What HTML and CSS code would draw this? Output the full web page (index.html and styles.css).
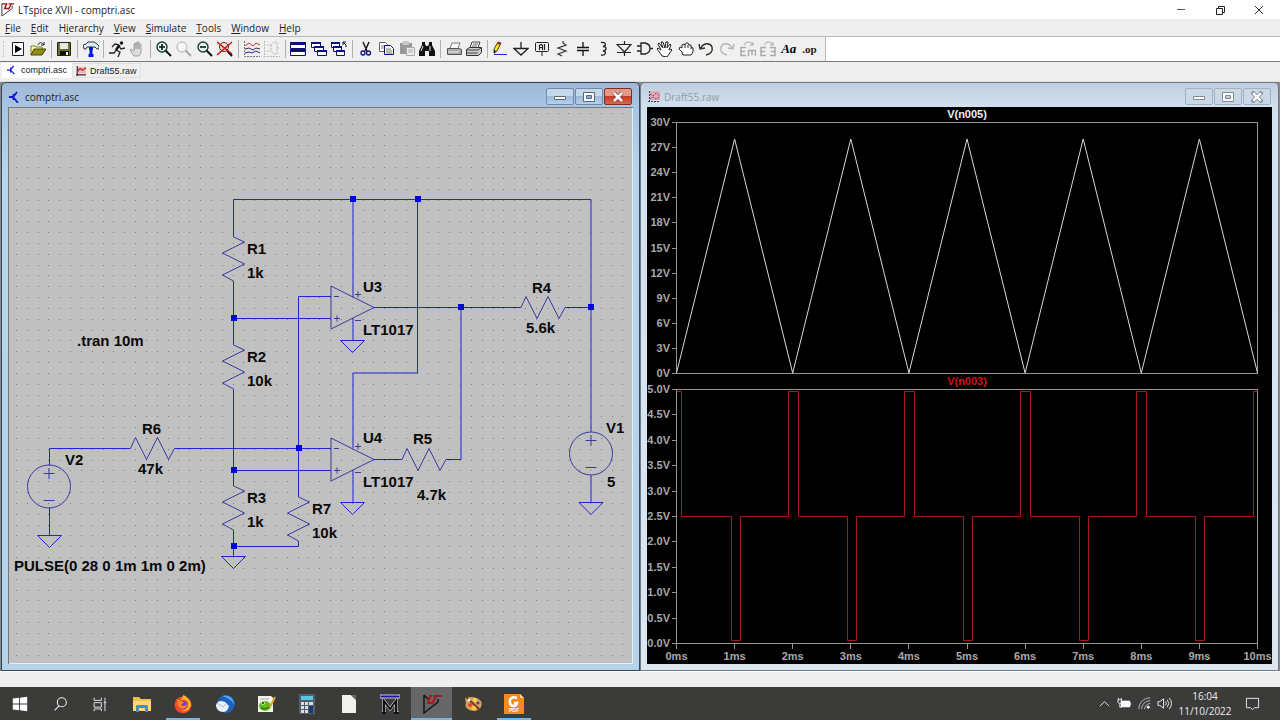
FILE: index.html
```html
<!DOCTYPE html>
<html lang="en">
<head>
  <meta charset="UTF-8">
  <meta name="viewport" content="width=device-width, initial-scale=1.0">
  <title>LTspice XVII - comptri.asc</title>
  <link rel="stylesheet" href="styles.css">
</head>
<body>
  <header class="titlebar">
    <svg class="app-icon" viewBox="0 0 16 16"><path d="M2 2v13l11-8V4" fill="none" stroke="#333"/><path d="M2 2h4M7 2L5 7h4M9 2h6M12 2l-3 6M6 2h2" fill="none" stroke="#a00f1c" stroke-width="1.500"/></svg>
    <span class="title">LTspice XVII - comptri.asc</span>
    <div class="sysbuttons">
      <button aria-label="Minimize"><svg viewBox="0 0 12 12"><path d="M2 5.500h8" stroke="#555"/></svg></button>
      <button aria-label="Restore"><svg viewBox="0 0 12 12"><path d="M2.500 4.500h6v6h-6zM4.500 4.500v-2h6v6h-2" fill="none" stroke="#222"/></svg></button>
      <button aria-label="Close"><svg viewBox="0 0 12 12"><path d="M2 2l8 8M10 2l-8 8" stroke="#333"/></svg></button>
    </div>
  </header>

  <nav class="menubar">
    <button><u>F</u>ile</button>
    <button><u>E</u>dit</button>
    <button>H<u>i</u>erarchy</button>
    <button><u>V</u>iew</button>
    <button><u>S</u>imulate</button>
    <button><u>T</u>ools</button>
    <button><u>W</u>indow</button>
    <button><u>H</u>elp</button>
  </nav>

  <div class="toolstrip">
    <div class="toolbar">
      <button aria-label="New"><svg viewBox="0 0 16 16"><path d="M2.500 1.500h11v13h-11z" fill="#fff" stroke="#222"/><path d="M5 4v8l7-4z" fill="#000"/></svg></button>
      <button aria-label="Open"><svg viewBox="0 0 16 16"><path d="M1 14V5h4l1 1h6v2" fill="#ffffa0" stroke="#777720"/><path d="M1 14l3-6h12l-4 6z" fill="#8c8c18" stroke="#444408"/><path d="M8 4c1-3 4-3 6 0m0-3v3h-3" fill="none" stroke="#222"/></svg></button>
      <i class="sep"></i>
      <button aria-label="Save"><svg viewBox="0 0 16 16"><path d="M1.500 1.500h13v13h-13z" fill="#6d7024" stroke="#222"/><path d="M4 2h8v6H4z" fill="#e8e8e8"/><path d="M4 10h9v4H4z" fill="#111"/><path d="M10 11h2v3h-2z" fill="#fff"/></svg></button>
      <i class="sep"></i>
      <button aria-label="Control Panel"><svg viewBox="0 0 16 16"><path d="M0 4l3-1 2-2h6l3 2 2 2v3h-2l-2-2H4L3 8H1z" fill="#dceff4" stroke="#333"/><path d="M6 6h4v3H9.500v4h1v3h-5v-3h1V9H6z" fill="#0018e0"/></svg></button>
      <i class="sep"></i>
      <button aria-label="Run"><svg viewBox="0 0 16 16"><circle cx="12.500" cy="2" r="1.700" fill="#111"/><path d="M10.500 4L7 9" stroke="#111" stroke-width="2.500"/><path d="M7 9l4 2-2 5M7 9l-2 3H0M10 4L6 3 3 6M10 5l2 3 4-1" fill="none" stroke="#222" stroke-width="1.300"/></svg></button>
      <button aria-label="Halt"><svg viewBox="0 0 16 16"><path d="M5 15l-4-6 1-1 3 2V3h1v5V2h2v6-7h2v7-5h2v9l-2 3z" fill="#dcdcdc" stroke="#a2a2a2"/></svg></button>
      <i class="sep"></i>
      <button aria-label="Zoom in"><svg viewBox="0 0 16 16"><circle cx="6" cy="6" r="5" fill="#e4f5ee" stroke="#134536" stroke-width="1.400"/><path d="M3 6h6M6 3v6" stroke="#111" stroke-width="1.600"/><path d="M9.500 9.500L15 15" stroke="#111" stroke-width="2"/></svg></button>
      <button aria-label="Pan"><svg viewBox="0 0 16 16"><circle cx="6" cy="6" r="5" fill="#f6f6f6" stroke="#b0b0b0"/><path d="M9.500 9.500L15 15" stroke="#aaa" stroke-width="2"/></svg></button>
      <button aria-label="Zoom out"><svg viewBox="0 0 16 16"><circle cx="6" cy="6" r="5" fill="#e4f5ee" stroke="#134536" stroke-width="1.400"/><path d="M3 6h6" stroke="#111" stroke-width="1.600"/><path d="M9.500 9.500L15 15" stroke="#111" stroke-width="2"/></svg></button>
      <button aria-label="Zoom to fit"><svg viewBox="0 0 16 16"><circle cx="7" cy="6" r="4.500" fill="#f8dcd8" stroke="#432"/><path d="M10 9.500l5 5.500" stroke="#111" stroke-width="2"/><path d="M0 1l15 12M15 1L0 14" stroke="#c31414" stroke-width="1.500"/></svg></button>
      <i class="sep"></i>
      <button aria-label="Autorange"><svg viewBox="0 0 16 16"><path d="M.500 0v15.500H16" fill="none" stroke="#777" stroke-dasharray="2 1"/><path d="M1 5l4-3 4 3 3-3 4 2" fill="none" stroke="#b33"/><path d="M1 8l4-1 4 2 3-2 4 1" fill="none" stroke="#333"/><path d="M1 12l4-1 3 1 4-2 4 2" fill="none" stroke="#22b"/></svg></button>
      <button aria-label="Symbol"><svg viewBox="0 0 16 16" fill="none" stroke="#b8b8b8"><path d="M.500 0v15.500H16" stroke-dasharray="2 1"/><path d="M3 4h4l3-3h3v12h-3L7 10H3M7 4v6M13 7h3" stroke-dasharray="2 1"/></svg></button>
      <i class="sep"></i>
      <button aria-label="Tile"><svg viewBox="0 0 16 16"><path d="M.500 1.500h15v6H.500zM.500 8.500h15v6H.500z" fill="#fff" stroke="#10107c"/><path d="M0 1h16v3H0zM0 8h16v3H0z" fill="#10107c"/></svg></button>
      <button aria-label="Cascade"><svg viewBox="0 0 16 16"><g fill="#fff" stroke="#10107c"><path d="M.500 1.500h9v5h-9z"/><path d="M3.500 5.500h9v5h-9z"/><path d="M6.500 9.500h9v5h-9z"/></g><path d="M0 1h10v2H0zM3 5h10v2H3zM6 9h10v2H6z" fill="#10107c"/></svg></button>
      <button aria-label="Close all"><svg viewBox="0 0 16 16"><g fill="#fff" stroke="#10107c"><path d="M.500 1.500h8v5h-8z"/><path d="M2.500 5.500h8v5h-8z"/><path d="M5.500 9.500h8v5h-8z"/></g><path d="M0 1h9v2H0zM2 5h9v2H2zM5 9h9v2H5z" fill="#10107c"/><path d="M15 6V4l-3-3m0 3V1h3" fill="none" stroke="#111"/></svg></button>
      <i class="sep"></i>
      <button aria-label="Cut"><svg viewBox="0 0 16 16" fill="none"><path d="M5 1l4 9M11 1L7 10" stroke="#111" stroke-width="1.400"/><circle cx="5" cy="12" r="2" stroke="#10107c" stroke-width="1.300"/><circle cx="10.500" cy="12" r="2" stroke="#10107c" stroke-width="1.300"/></svg></button>
      <button aria-label="Copy"><svg viewBox="0 0 16 16"><path d="M1.500 1.500h6l2 2v7h-8z" fill="#fff" stroke="#666"/><path d="M3 5h4M3 7h4" stroke="#888"/><path d="M6.500 4.500h6l3 3v6h-9z" fill="#fff" stroke="#10107c"/><path d="M8 8h5M8 10h6M8 12h6" stroke="#777"/></svg></button>
      <button aria-label="Paste"><svg viewBox="0 0 16 16"><path d="M1 2h12v11H1z" fill="#999"/><path d="M4 0h6v4H4z" fill="#c8c8c8"/><path d="M7.500 6.500h8v8h-8z" fill="#eee" stroke="#aaa"/><path d="M9 9h5M9 11h5" stroke="#aaa"/></svg></button>
      <button aria-label="Find"><svg viewBox="0 0 16 16"><path d="M3 1h3v2l1 2h2l1-2V1h3v3l3 6v5h-6v-5H6v5H0v-5l3-6z" fill="#111"/><path d="M4 5l-2 5M11 5v5" stroke="#eee"/></svg></button>
      <i class="sep"></i>
      <button aria-label="Page setup"><svg viewBox="0 0 16 16"><path d="M4 7l2-5h8l-2 5" fill="#fff" stroke="#777"/><path d="M1.500 7.500h12l2 1v5h-14z" fill="#aaa" stroke="#555"/><path d="M2 11h11" stroke="#eee"/></svg></button>
      <button aria-label="Print"><svg viewBox="0 0 16 16"><path d="M4 7l2-6h8l-2 6" fill="#fff" stroke="#444"/><path d="M7 3h5M6 5h5" stroke="#666"/><path d="M.500 8.500l3-2h12v5l-3 3h-12z" fill="#ccc" stroke="#333"/><path d="M1 9h11l3-2M1 12h11" fill="none" stroke="#444"/></svg></button>
      <i class="sep"></i>
      <button aria-label="Wire"><svg viewBox="0 0 16 16"><path d="M2 8l4-7 3 1-4 8-3 2z" fill="#f2ec1a" stroke="#443"/><path d="M6 1l3 1-1 2-3-1z" fill="#c81a1a"/><path d="M2 9l2 1-2 3z" fill="#111"/><path d="M2 13.500h13" stroke="#22d"/></svg></button>
      <button aria-label="Ground"><svg viewBox="0 0 16 16"><path d="M8 1v6M1 7.500h14L8 14z" fill="none" stroke="#222" stroke-width="1.300"/></svg></button>
      <button aria-label="Label Net"><svg viewBox="0 0 16 16" fill="none" stroke="#222"><rect x="1.500" y="1.500" width="13" height="9" rx="1"/><path d="M8 11v4"/><path d="M5.500 9V4.500l1-1h1l1 1V9M5.500 6.500h3M10.500 3v6" stroke-width="1.200"/></svg></button>
      <button aria-label="Resistor"><svg viewBox="0 0 16 16"><path d="M9 0v2l3 2-8 3 8 3-8 3 4 2" fill="none" stroke="#333" stroke-width="1.200"/></svg></button>
      <button aria-label="Capacitor"><svg viewBox="0 0 16 16"><path d="M8 1v5M8 10v5" stroke="#111" stroke-width="1.300"/><path d="M2 6.500h12M2 9.500h12" stroke="#111" stroke-width="1.500"/></svg></button>
      <button aria-label="Inductor"><svg viewBox="0 0 16 16"><path d="M6 1.500c5-1 6 3.500 2 4 4 0 4 4 0 4.500 4 0 3 5-2 4" fill="none" stroke="#222" stroke-width="1.300"/></svg></button>
      <button aria-label="Diode"><svg viewBox="0 0 16 16"><path d="M8.500 0v3M8.500 11v4M1 3.500h14L8.500 11zM1 11.500h14" fill="none" stroke="#222" stroke-width="1.200"/></svg></button>
      <button aria-label="Component"><svg viewBox="0 0 16 16"><path d="M0 5h4M0 10h4M4 2h4q5 1 5 5.500T8 13H4zM13 7.500h3" fill="none" stroke="#222" stroke-width="1.300"/></svg></button>
      <button aria-label="Move"><svg viewBox="0 0 16 16"><path d="M5 15L3 12 0 8l1-1 3 2-3-6 1-1 4 5-2-6h2l2 6 1-6h2l-1 6 3-4 1 1-2 5 2-1 1 1-3 4-2 3z" fill="#fff" stroke="#222"/></svg></button>
      <button aria-label="Drag"><svg viewBox="0 0 16 16"><path d="M5 14l-1-3-3-3 1-2 2 1V4l2-1 1 1 1-2h2l1 2h2v2l2 1v4l-2 3z" fill="#fff" stroke="#222"/><path d="M7 4v3M10 4v3M13 6v2" stroke="#222"/></svg></button>
      <button aria-label="Undo"><svg viewBox="0 0 16 16"><path d="M3 7c2-5 9-6 11-1 1 4-1 7-6 8M1 3l1 5 5-1" fill="none" stroke="#332d24" stroke-width="1.400"/></svg></button>
      <button aria-label="Redo"><svg viewBox="0 0 16 16"><path d="M13 7c-2-5-9-6-11-1-1 4 1 7 6 8M15 3l-1 5-5-1" fill="none" stroke="#b5b5b5" stroke-width="1.400"/></svg></button>
      <button aria-label="Rotate"><svg viewBox="0 0 16 16" fill="none" stroke="#aaa"><path d="M4 4c2-4 7-4 9 0m0-3v3h-3"/><path d="M6 6.500H1v8h5M1 10.500h4" stroke-width="1.500"/><path d="M8.500 15V9.500h7V15M12 10v4" stroke-width="1.500"/></svg></button>
      <button aria-label="Mirror"><svg viewBox="0 0 16 16" fill="none" stroke="#aaa"><path d="M4 4c2-4 7-4 9 0m0-3v3h-3"/><path d="M6 6.500H1v8h5M1 10.500h4M10 6.500h5v8h-5M15 10.500h-4" stroke-width="1.500"/></svg></button>
      <button class="text-tool">Aa</button>
      <button class="op-tool">.op</button>
    </div>
  </div>

  <div class="tabs">
    <button class="tab active"><svg viewBox="0 0 12 12"><path d="M0 6h4M4.500 3v6M5 5l3-4M5 7l4 4" fill="none" stroke="#1414d2" stroke-width="1.500"/></svg>comptri.asc</button>
    <button class="tab"><svg viewBox="0 0 12 12"><path d="M2 1h10v8H2z" fill="#e9b6b6"/><path d="M1.500 0v12M0 10.500h12" stroke="#333" stroke-width="1.500"/><path d="M2 6l3-3 3 2 4-3" fill="none" stroke="#c22" stroke-width="1.500"/></svg>Draft55.raw</button>
  </div>

  <main class="mdi">
    <section class="window">
      <div class="caption">
        <svg class="caption-icon" viewBox="0 0 12 12"><path d="M0 6h4M4.500 3v6M5 5l3-4M5 7l4 5" fill="none" stroke="#1414d2" stroke-width="1.800"/></svg>
        <span>comptri.asc</span>
        <div class="caption-buttons">
          <button aria-label="Minimize"><svg viewBox="0 0 12 12"><path d="M.500 5.500h11v3H.500z" fill="#fff" stroke="#56657a"/></svg></button>
          <button aria-label="Maximize"><svg viewBox="0 0 12 12"><path d="M.500 1.500h11v9H.500z" fill="#fff" stroke="#56657a"/><path d="M3.500 4.500h5v3h-5z" fill="#8bacd0" stroke="#56657a"/></svg></button>
          <button class="close" aria-label="Close"><svg viewBox="0 0 12 12"><path d="M2 2l8 8M10 2l-8 8" stroke="#6b4444" stroke-width="4"/><path d="M2 2l8 8M10 2l-8 8" stroke="#fff" stroke-width="2.500"/></svg></button>
        </div>
      </div>
      <div class="client">
        <svg class="schematic" viewBox="8 107 625 557" preserveAspectRatio="xMinYMin meet">
          <defs>
            <path id="res" d="M0 0l11 5-22 11 22 11-22 11 11 6"/>
            <path id="resh" d="M0 0l5-11 11 22 11-22 11 22 6-11"/>
            <path id="gnd" d="M-12 0h24L0 12z"/>
            <g id="source">
              <circle r="21.500"/>
              <path d="M-5.500-13h11M0-18.500v11M-5.500 14h11"/>
            </g>
            <g id="opamp">
              <path d="M0-21.500v43L43 0zM3-11h5M3 11h6M6 8v6M24-13h6M27-16v6M24 13h6"/>
            </g>
          </defs>
          <path id="grid" class="grid"/>
          <g class="wires">
            <path d="M233.500 237V199.500H591V432M353 199.500V297M417.500 199.500V373H353V448"/>
            <path d="M233.500 281v64M233.500 318.500H331M331 296.500H298.500V497M233.500 389v97M233.500 530v27"/>
            <path d="M49.500 465V448.500H130.500M174.500 448.500H331M233.500 470.500H331M233.500 546.500h65V541"/>
            <path d="M374 307.500H521M565 307.500H591M374 459.500h28M446 459.500h15V307.500"/>
            <path d="M353 318v22M353 470v32M591 475v27M49.500 507v28"/>
            <use href="#gnd" x="352.500" y="340.500"/>
            <use href="#gnd" x="352.500" y="502.500"/>
            <use href="#gnd" x="591" y="502.500"/>
            <use href="#gnd" x="49.500" y="535.500"/>
            <use href="#gnd" x="233.500" y="556.500"/>
          </g>
          <g class="parts">
            <use href="#res" x="233.500" y="237"/>
            <use href="#res" x="233.500" y="345"/>
            <use href="#res" x="233.500" y="486"/>
            <use href="#res" x="298.500" y="497"/>
            <use href="#resh" x="521" y="307.500"/>
            <use href="#resh" x="130.500" y="448.500"/>
            <use href="#resh" x="402" y="459.500"/>
            <use href="#opamp" x="331" y="307.500"/>
            <use href="#opamp" x="331" y="459.500"/>
            <use href="#source" x="49" y="486.500"/>
            <use href="#source" x="591" y="453.500"/>
          </g>
          <path class="nodes" d="M350 196h6v6h-6zM415 196h6v6h-6zM231 315h6v6h-6zM458 304h6v6h-6zM588 304h6v6h-6zM296 445h6v6h-6zM231 467h6v6h-6zM231 543h6v6h-6z"/>
          <g class="labels">
            <text x="247" y="254">R1</text><text x="247" y="278">1k</text>
            <text x="247" y="362">R2</text><text x="247" y="386">10k</text>
            <text x="247" y="503">R3</text><text x="247" y="527">1k</text>
            <text x="312" y="514">R7</text><text x="312" y="538">10k</text>
            <text x="532" y="293">R4</text><text x="526" y="333">5.6k</text>
            <text x="413" y="444">R5</text><text x="417" y="500">4.7k</text>
            <text x="142" y="434">R6</text><text x="138" y="474">47k</text>
            <text x="363" y="292">U3</text><text x="363" y="335">LT1017</text>
            <text x="363" y="443">U4</text><text x="363" y="487">LT1017</text>
            <text x="606" y="433">V1</text><text x="607" y="487">5</text>
            <text x="65" y="465">V2</text>
            <text x="77" y="346">.tran 10m</text>
            <text x="14" y="571">PULSE(0 28 0 1m 1m 0 2m)</text>
          </g>
        </svg>
      </div>
    </section>

    <section class="window inactive">
      <div class="caption">
        <svg class="caption-icon" viewBox="0 0 12 12"><path d="M2 0h10v9H2z" fill="#dda9b8"/><path d="M1.500 0v12M0 10.500h12" stroke="#445" stroke-dasharray="2 1"/><path d="M2 3l3 2 3-3 4 3M2 8l3-2 3 2 4-2" fill="none" stroke="#946" stroke-dasharray="2 1"/></svg>
        <span>Draft55.raw</span>
        <div class="caption-buttons">
          <button aria-label="Minimize"><svg viewBox="0 0 12 12"><path d="M.500 5.500h11v3H.500z" fill="#fff" stroke="#7f8893"/></svg></button>
          <button aria-label="Maximize"><svg viewBox="0 0 12 12"><path d="M.500 1.500h11v9H.500z" fill="#fff" stroke="#7f8893"/><path d="M3.500 4.500h5v3h-5z" fill="#c2cedc" stroke="#7f8893"/></svg></button>
          <button aria-label="Close"><svg viewBox="0 0 12 12"><path d="M1 1l10 10M11 1L1 11" stroke="#6f7883" stroke-width="4"/><path d="M2 2l8 8M10 2l-8 8" stroke="#fff" stroke-width="2.500"/></svg></button>
        </div>
      </div>
      <div class="client">
        <svg class="plots" viewBox="647 107 625 557" preserveAspectRatio="xMinYMin meet">
          <g id="axes" class="axes"></g>
          <path id="trace1" class="trace white"/>
          <path id="trace2" class="trace red"/>
          <text class="name white" x="967" y="118">V(n005)</text>
          <text class="name red" x="967" y="385">V(n003)</text>
        </svg>
      </div>
    </section>
  </main>

  <div class="statusbar"></div>

  <footer class="taskbar">
    <div class="system">
      <button aria-label="Start"><svg viewBox="0 0 20 20"><path d="M2 4l7-1v6.500H2zM10 3l8-1v7.500h-8zM2 10.500h7V17l-7-1zM10 10.500h8V18l-8-1z" fill="#fff"/></svg></button>
      <button aria-label="Search"><svg viewBox="0 0 20 20"><circle cx="12" cy="8" r="5" fill="none" stroke="#eee" stroke-width="1.200"/><path d="M9 12l-5 5" stroke="#eee" stroke-width="1.200"/></svg></button>
      <button aria-label="Task View"><svg viewBox="0 0 20 20"><path d="M3.500 3v3h8V3M3.500 8.500h8v5h-8zM3.500 18v-2.500h8V18M15.500 3v15M14 8.500h3" fill="none" stroke="#eee"/></svg></button>
    </div>
    <div class="apps">
      <button aria-label="File Explorer"><svg viewBox="0 0 20 20"><path d="M1 3h6l2 2h10v12H1z" fill="#f0bd4f"/><path d="M1 7h18v10H1z" fill="#ffd979"/><path d="M4 18v-6l1-1h10l1 1v6h-3v-4H7v4z" fill="#3d91cb"/></svg></button>
      <button class="open" aria-label="Firefox"><svg viewBox="0 0 20 20"><circle cx="10" cy="11" r="8.500" fill="#f5432f"/><path d="M3 5c2 1 3 1 4 1 2-2 3-3 3-5 5 2 8 6 8 10-1 5-5 7-10 6 6-1 9-5 6-10-4-3-9 0-9 0z" fill="#ffb526"/><circle cx="10" cy="11" r="4" fill="#7a3fc8"/><path d="M4 8c3-2 6-1 7 1-2 0-2 1-3 2 2 2 5 1 6-1 0 6-9 7-10-2" fill="#ff8a22"/></svg></button>
      <button aria-label="Thunderbird"><svg viewBox="0 0 20 20"><circle cx="11" cy="10" r="9" fill="#1c62bd"/><path d="M7 2c7-2 12 2 12 9-2-5-6-7-12-9" fill="#52a8ee"/><path d="M1 11c1-4 5-5 9-3l4 4c-1 4-3 6-6 6-4 0-7-3-7-7z" fill="#edf1f8"/><path d="M2 9l6 4 4-4" fill="none" stroke="#a9bad0"/></svg></button>
      <button aria-label="Notepad++"><svg viewBox="0 0 20 20"><path d="M2 2h13l2 2v14H2z" fill="#f4f4ec"/><path d="M4 5h9" stroke="#aaa"/><ellipse cx="9" cy="12" rx="6" ry="5" fill="#65b925"/><circle cx="7" cy="9" r="2" fill="#c8ee92"/><circle cx="7" cy="9" r="1" fill="#222"/><path d="M5 14q5 2 8-1" fill="none" stroke="#285b10"/><path d="M14 13l5-10" stroke="#e4a22b" stroke-width="2"/></svg></button>
      <button aria-label="Calculator"><svg viewBox="0 0 20 20"><path d="M2 0h16v20H2z" fill="#52606c"/><path d="M4 2h12v4H4z" fill="#56c7e8"/><path d="M4 8h3v3H4zM8 8h3v3H8zM12 8h4v3h-4zM4 12h3v3H4zM8 12h3v3H8zM4 16h3v3H4zM8 16h3v3H8z" fill="#ddd"/><path d="M12 12h4v7h-4z" fill="#173c77"/></svg></button>
      <button aria-label="Document"><svg viewBox="0 0 20 20"><path d="M3 1h9l5 5v13H3z" fill="#f0f0ee"/><path d="M12 1h5v5z" fill="#686866"/></svg></button>
      <button aria-label="Mathcad"><svg viewBox="0 0 20 20"><path d="M4 19V7l6 8 6-8v12M2 19h4M14 19h5" fill="none" stroke="#ddd" stroke-width="3"/><path d="M4 19V7l6 8 6-8v12M2 19h4M14 19h5" fill="none" stroke="#111" stroke-width="2"/><path d="M0 1h20v3H0z" fill="#1717a8" stroke="#ccc"/></svg></button>
      <button class="open current" aria-label="LTspice"><svg viewBox="0 0 20 20"><path d="M2 1v18l14-11V5M2 1l5 5" fill="none" stroke="#151515" stroke-width="1.500"/><path d="M8 2L6 9h5M11 2h9M14 2l-4 8M7 2h3" fill="none" stroke="#a91722" stroke-width="2"/></svg></button>
      <button aria-label="Paint"><svg viewBox="0 0 20 20"><path d="M2 4q10-3 16 3c2 5-1 9-6 10C5 17 1 13 3 9z" fill="#dca15b"/><path d="M3 3l14 13" stroke="#773a20" stroke-width="2"/><circle cx="7" cy="11" r="2" fill="#e3412c"/><circle cx="12" cy="6" r="2" fill="#f5dc38"/><circle cx="15" cy="9" r="1.500" fill="#4a3b9a"/><circle cx="11" cy="14" r="2" fill="#f5cf3b"/><circle cx="6" cy="6" r="1.500" fill="#fff"/></svg></button>
      <button class="open" aria-label="PDF Reader"><svg viewBox="0 0 20 20"><path d="M0 0h16l4 4v16H0z" fill="#f58b1f"/><path d="M16 0v4h4z" fill="#ffd3a0"/><path d="M13 4C8 2 5 5 6 9c1 4 6 4 7 0h-3" fill="none" stroke="#fff" stroke-width="2.500"/><text x="10" y="18" class="pdf">PDF</text></svg></button>
    </div>
    <div class="tray">
      <button aria-label="Show hidden icons"><svg viewBox="0 0 16 16"><path d="M3 11l5-5 5 5" fill="none" stroke="#eee"/></svg></button>
      <button aria-label="Battery"><svg viewBox="0 0 16 16"><path d="M4 5h10v7H4z" fill="#fff"/><path d="M14.500 7v3M1 4h4v3L3 8 1 7zM1.500 2v2M4.500 2v2M3 8v4h2" stroke="#eee" fill="none"/></svg></button>
      <button aria-label="Wi-Fi"><svg viewBox="0 0 16 16"><g fill="none" stroke="#bbb"><path d="M2 14C2 7 7 2 14 2"/><path d="M5 14c0-5 4-9 9-9M8 14c0-3 3-6 6-6"/></g><circle cx="12" cy="12" r="1.500" fill="#fff"/></svg></button>
      <button aria-label="Volume"><svg viewBox="0 0 16 16"><path d="M1 6h2l4-3v10l-4-3H1zM9 6q2 2 0 4M11 4q3 4 0 8M13 2q5 6 0 12" fill="none" stroke="#eee"/></svg></button>
      <div class="clock"><time>16:04</time><span>11/10/2022</span></div>
      <button class="notify" aria-label="Notifications"><svg viewBox="0 0 16 16"><path d="M1.500 2.500h13v10H10l-2 2-2-2H1.500z" fill="none" stroke="#eee"/></svg></button>
    </div>
  </footer>

  <script src="script.js"></script>
</body>
</html>
```
FILE: styles.css
```css
* { box-sizing: border-box; }
body { margin: 0; height: 100vh; display: flex; flex-direction: column; overflow: hidden; background: #efefef; color: #222; font: 10px "Open Sans", "Noto Sans", sans-serif; }
button { border: 0; padding: 0; background: none; color: inherit; font: inherit; }
svg { display: block; }

.titlebar { flex: none; height: 19px; display: flex; align-items: center; background: #fff; }
.app-icon { width: 15px; height: 15px; margin-right: 3px; }
.sysbuttons { margin-left: auto; display: flex; padding-right: 2px; }
.sysbuttons button { width: 39px; height: 19px; display: grid; place-items: center; }
.sysbuttons svg { width: 12px; height: 12px; }

.menubar { flex: none; height: 18px; display: flex; align-items: center; gap: 10px; padding-left: 5px; border-bottom: 1px solid #b9b9b9; }

.toolstrip { flex: none; height: 25px; background: #fff; border-bottom: 1px solid #777; }
.toolbar { max-width: 826px; height: 24px; display: flex; align-items: center; justify-content: space-between; padding: 0 5px 0 3px; background: #f0f0f0; border-right: 1px solid #bbb; }
.toolbar::before { content: ""; width: 3px; height: 16px; border-left: 1px dotted #bbb; }
.toolbar button { flex: none; width: 20px; height: 20px; display: grid; place-items: center; }
.toolbar svg { width: 16px; height: 16px; }
.sep { flex: none; width: 1px; height: 18px; margin: 0 2px; background: #b0b0b0; }
.toolbar .text-tool { font: italic bold 13px "Liberation Serif", serif; color: #000; }
.toolbar .op-tool { font: bold 11px "Liberation Serif", serif; color: #222; }

.tabs { flex: none; height: 20px; display: flex; padding: 1px 0 3px 2px; border-bottom: 1px solid #ddd; }
.tab { display: flex; align-items: center; gap: 4px; padding: 0 3px; font: 9px "Liberation Sans", sans-serif; border: 1px solid #e0e0e0; }
.tab.active { background: #fff; border-color: #fff; padding: 0 4px 2px; }
.tab svg { width: 10px; height: 10px; }

.mdi { flex: 1; min-height: 0; display: grid; grid-template-columns: 1fr 1fr; padding: 0 1px; background: #888; }
.window { min-width: 0; min-height: 0; display: flex; flex-direction: column; padding: 0 6px 6px; border: 1px solid #34475a; border-radius: 5px 5px 0 0; background: linear-gradient(#a0b8d6 0, #a8c5e1 24px, #b8d4ea 90px, #b4d3e8); }
.window.inactive { background: linear-gradient(#bfcddd 0, #d3e1ee 24px, #dbe6f1); border-color: #6d7b8a; color: #959ca5; }
.caption { flex: none; height: 24px; display: flex; align-items: center; padding-top: 4px; gap: 4px; }
.caption-icon { width: 12px; height: 12px; margin-left: 1px; }
.caption-buttons { margin-left: auto; display: flex; gap: 1px; padding: 0 1px 1px 0; }
.caption-buttons button { width: 28px; height: 17px; display: grid; place-items: center; border: 1px solid #6f8aab; border-radius: 2px; background: linear-gradient(#c4d8ec 45%, #9dbbd9 50%, #b5d0ea); }
.caption-buttons .close { border-color: #7e2e29; background: linear-gradient(#e29a87 45%, #c43c24 50%, #d8674c); }
.inactive .caption-buttons button { border-color: #a3b0c0; background: #cbd8e6; }
.caption-buttons svg { width: 12px; height: 12px; }
.client { flex: 1; min-height: 0; background: #c0c0c0; box-shadow: inset 1px 1px #777, inset -1px -1px #e4eef6; }
.inactive .client { background: #000; box-shadow: none; }

.schematic, .plots { width: 100%; height: 100%; }
.grid { fill: #7c7c7c; shape-rendering: crispEdges; }
.wires { fill: none; stroke: #2222d8; }
.parts { fill: none; stroke: #3a3aa0; }
.nodes { fill: #0000e0; }
.labels { font: bold 15px "Liberation Sans", sans-serif; fill: #0a0a0a; }

.axes { fill: none; stroke: #949494; shape-rendering: crispEdges; }
.axes text { font: bold 11px "Liberation Sans", sans-serif; fill: #a8a8a8; stroke: none; }
.axes .x { text-anchor: middle; }
.axes .y { text-anchor: end; }
.trace { fill: none; }
.trace.white { stroke: #d8d8d8; }
.trace.red { stroke: #a81a20; }
.name { font: bold 11px "Liberation Sans", sans-serif; text-anchor: middle; }
.name.white { fill: #eee; }
.name.red { fill: #d01018; }

.statusbar { flex: none; height: 16px; border-top: 1px solid #fff; background: #efefef; }

.taskbar { flex: none; height: 33px; display: flex; background: #3b3b3a; color: #eee; }
.taskbar button { display: grid; place-items: center; }
.system { display: flex; }
.system button { width: 40px; }
.system svg { width: 18px; height: 18px; }
.apps { width: 414px; display: flex; margin-left: 1px; }
.apps button { flex: 1; }
.apps svg { width: 20px; height: 20px; }
.apps .open { background: linear-gradient(#76b4e4, #76b4e4) center bottom / 34px 2px no-repeat; }
.apps .current { background-color: #666; background-size: 100% 2px; }
.pdf { font: bold 5px "Liberation Sans", sans-serif; fill: #fff; text-anchor: middle; }
.tray { margin-left: auto; display: flex; align-items: center; }
.tray button { width: 20px; }
.tray svg { width: 15px; height: 15px; }
.clock { width: 62px; display: flex; flex-direction: column; align-items: center; line-height: 15px; }
.tray .notify { width: 44px; padding-right: 12px; }
```
FILE: script.js
```js
// schematic grid, one dot every 10.83px
let dots = '';
for (let row = 0; row < 51; row++) {
  for (let col = 0; col < 57; col++) {
    const x = Math.round(16 + col * 10.83);
    const y = Math.round(113 + row * 10.83);
    dots += `M${x} ${y}h1v1h-1z`;
  }
}
document.getElementById('grid').setAttribute('d', dots);

// plot panes
const left = 676.5, right = 1257.5;
const panes = [
  { top: 122.5, bottom: 373.5, max: 30, step: 3, digits: 0 },
  { top: 389.5, bottom: 643.5, max: 5, step: 0.5, digits: 1 }
];
const ms = (right - left) / 10;

let axes = '';
panes.forEach(p => {
  axes += `<rect x="${left}" y="${p.top}" width="${right - left}" height="${p.bottom - p.top}"/>`;
  for (let i = 0; i <= 10; i++) {
    const y = Math.round(p.top + (p.bottom - p.top) * i / 10 - 0.5) + 0.5;
    const value = (p.max - i * p.step).toFixed(p.digits);
    axes += `<path d="M${left - 5} ${y}h5"/><text class="y" x="670" y="${y + 3.5}">${value}V</text>`;
  }
});
for (let i = 0; i <= 10; i++) {
  const x = left + i * ms;
  axes += `<path d="M${x} 643.5v5"/><text class="x" x="${x}" y="660">${i}ms</text>`;
}
document.getElementById('axes').innerHTML = axes;

// V(n005): 0 to 28V triangle
let tri = `M${left} 373`;
for (let i = 1; i <= 10; i++) {
  tri += `L${left + i * ms} ${i % 2 ? 139 : 373}`;
}
document.getElementById('trace1').setAttribute('d', tri);

// V(n003): high around even ms, low around odd ms
let out = `M${left} 391.5H681.5V516.5`;
for (let i = 1; i < 10; i++) {
  const x = Math.round(left + i * ms) - 0.5;
  const y = i % 2 ? 640.5 : 391.5;
  const from = i % 2 ? x - 3 : x - 4;
  out += `H${from}V${y}h${i % 2 ? 9 : 10}V516.5`;
}
out += `H1253.5V391.5H${right}`;
document.getElementById('trace2').setAttribute('d', out);
```
